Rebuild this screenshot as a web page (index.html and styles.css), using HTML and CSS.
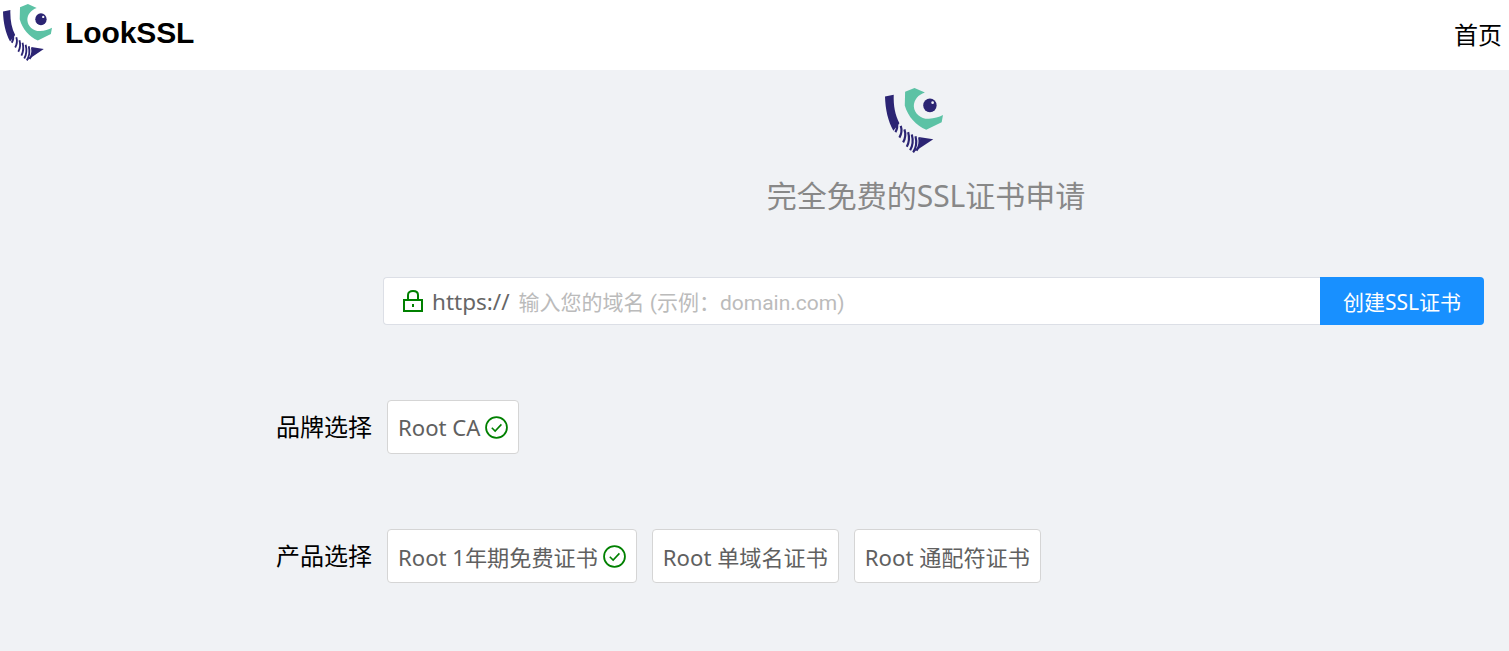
FILE: index.html
```html
<!DOCTYPE html>
<html lang="zh-CN">
<head>
<meta charset="utf-8">
<title>LookSSL</title>
<link rel="stylesheet" href="styles.css">
</head>
<body>
<svg class="defs" width="0" height="0" aria-hidden="true">
  <symbol id="logo" viewBox="47 25 173 190" preserveAspectRatio="none">
    <path fill="#5cc2a5" d="M107 36 L135 25 L166 38 C146 44 133 60 133 78 C134 100 155 116 178 115 C194 114 208 110 220 104 L216 125 L170 147 C140 134 116 110 106 76 Z"/>
    <circle cx="181" cy="76" r="20" fill="#2b2473"/>
    <circle cx="189" cy="68" r="4" fill="#f0f1f6"/>
    <path fill="#2b2473" d="M47 50 L73 45 C72 78 77 104 90 128 L72 150 C56 122 48 88 47 50 Z"/>
    <path fill="none" stroke="#2b2473" stroke-width="6.5" d="M82 126 C85 136 83 146 78 154 M94 136 C98 148 96 160 90 170 M105 146 C109 158 108 172 101 184 M116 154 C120 168 119 184 112 197 M127 161 C131 176 130 194 122 207 M138 166 C142 182 140 200 131 213 M149 169 C152 184 149 198 141 208"/>
    <path fill="#2b2473" d="M130 214 L191 175 L152 169 C152 186 146 202 130 214 Z"/>
  </symbol>
</svg>

<header class="topbar">
  <a class="brand">
    <svg class="brand-logo"><use href="#logo"/></svg>
    <span class="brand-name">LookSSL</span>
  </a>
  <nav class="nav-link">首页</nav>
</header>

<main class="main">
  <section class="hero">
    <svg class="hero-logo"><use href="#logo"/></svg>
    <h1 class="hero-title">完全免费的SSL证书申请</h1>
  </section>

  <form class="search">
    <div class="search-field">
      <svg class="lock" viewBox="0 0 22 22" fill="none" stroke="#008000" stroke-width="2">
        <rect x="2" y="10" width="18" height="11"/>
        <path d="M6 10V5C6 2.2 8 1 11 1S16 2.2 16 5V10"/>
        <path d="M11 14v3"/>
      </svg>
      <span class="prefix">https://</span>
      <span class="placeholder">输入您的域名 (示例：domain.com)</span>
    </div>
    <button class="submit" type="button">创建SSL证书</button>
  </form>

  <div class="choice-row first">
    <span class="choice-label">品牌选择</span>
    <div class="chip">Root CA
      <svg class="check" viewBox="0 0 22 22" fill="none" stroke="#008000"><circle cx="11" cy="11" r="10" stroke-width="1.7"/><path d="M6.5 11.2l3.2 3.2 6-6.4" stroke-width="1.5"/></svg>
    </div>
  </div>

  <div class="choice-row">
    <span class="choice-label">产品选择</span>
    <div class="chip">Root 1年期免费证书
      <svg class="check" viewBox="0 0 22 22" fill="none" stroke="#008000"><circle cx="11" cy="11" r="10" stroke-width="1.7"/><path d="M6.5 11.2l3.2 3.2 6-6.4" stroke-width="1.5"/></svg>
    </div>
    <div class="chip">Root 单域名证书</div>
    <div class="chip">Root 通配符证书</div>
  </div>
</main>
</body>
</html>
```

FILE: styles.css
```css
* { box-sizing: border-box; }
html, body { margin: 0; height: 100%; }
body {
  background: #f0f2f5;
  font-family: "Noto Sans", "Noto Sans CJK SC", sans-serif;
  overflow: hidden;
}
.defs { position: absolute; }
.topbar {
  height: 70px;
  background: #fff;
  display: flex;
  align-items: center;
  justify-content: space-between;
  padding: 0 7px 0 3px;
}
.brand { display: flex; align-items: center; }
.brand-logo { width: 49px; height: 57px; margin-top: -6px; }
.brand-name {
  font: bold 30px "Liberation Sans", sans-serif;
  letter-spacing: -0.1px;
  color: #000;
  margin-left: 13px;
  padding-bottom: 4px;
}
.nav-link { font-size: 24px; line-height: 1; color: #000; font-family: "Noto Sans CJK SC", sans-serif; padding-bottom: 2px; }
.main { padding-top: 18px; }
.hero {
  margin-left: 368px;
  margin-right: 25px;
  display: flex;
  flex-direction: column;
  align-items: center;
}
.hero-logo { width: 58px; height: 65px; margin-right: 24px; }
.hero-title {
  margin: 22px 0 0;
  font-size: 30px;
  line-height: 42px;
  font-weight: 400;
  color: #888;
}
.search {
  display: flex;
  height: 48px;
  margin: 60px 25px 0 383px;
}
.search-field {
  flex: 1;
  display: flex;
  align-items: center;
  background: #fff;
  border: 1px solid #dcdfe6;
  border-right: 0;
  border-radius: 4px 0 0 4px;
  padding-left: 18px;
}
.lock { width: 22px; height: 22px; }
.prefix { font-size: 22.5px; color: #666; margin-left: 8px; }
.placeholder { font-family: Roboto, "Noto Sans CJK SC", sans-serif; font-size: 21px; color: #bbb; margin-left: 9px; }
.submit {
  width: 164px;
  border: 0;
  background: #1890ff;
  color: #fff;
  font: inherit;
  font-size: 21px;
  border-radius: 0 4px 4px 0;
  padding: 0;
}
.choice-row {
  display: flex;
  align-items: center;
  gap: 15px;
  margin: 75px 0 0 276px;
}
.choice-row.first { margin-top: 75px; }
.choice-label { font-size: 24px; color: #000; padding-bottom: 4px; }
.chip {
  height: 54px;
  display: flex;
  align-items: center;
  gap: 5px;
  padding: 0 10px;
  background: #fff;
  border: 1px solid #d5d5d5;
  border-radius: 4px;
  font-size: 22.15px;
  color: #606060;
  white-space: nowrap;
}
.check { width: 23px; height: 23px; }
```
